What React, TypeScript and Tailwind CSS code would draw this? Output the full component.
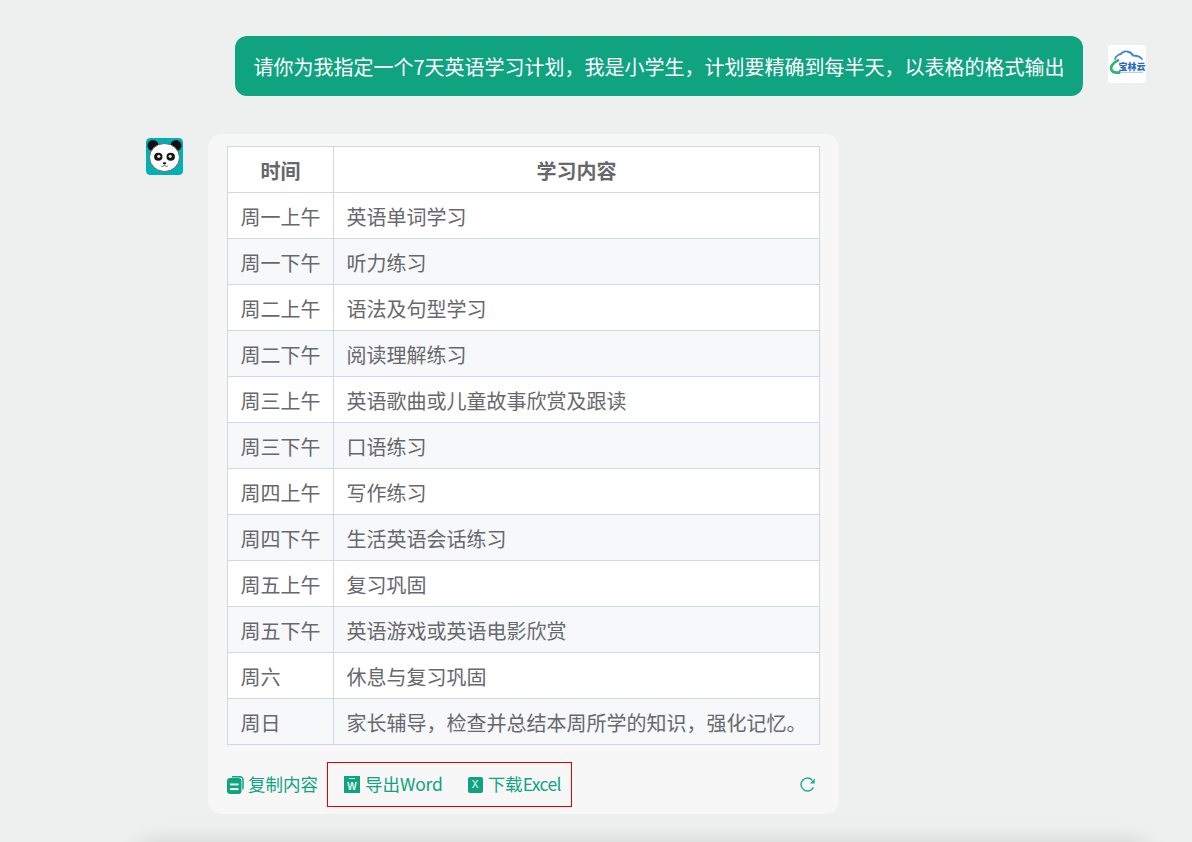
const rows = [
  ["周一上午", "英语单词学习"],
  ["周一下午", "听力练习"],
  ["周二上午", "语法及句型学习"],
  ["周二下午", "阅读理解练习"],
  ["周三上午", "英语歌曲或儿童故事欣赏及跟读"],
  ["周三下午", "口语练习"],
  ["周四上午", "写作练习"],
  ["周四下午", "生活英语会话练习"],
  ["周五上午", "复习巩固"],
  ["周五下午", "英语游戏或英语电影欣赏"],
  ["周六", "休息与复习巩固"],
  ["周日", "家长辅导，检查并总结本周所学的知识，强化记忆。"],
];

function CloudLogo() {
  return (
    <svg viewBox="0 0 38 38" className="h-full w-full">
      <path d="M7 14c1-3 4-5 6-5 1-2 4-3 6-2.500 3 .5 5 2 6 4 4 0 7 1 9 3.500" fill="none" stroke="#3f86d8" strokeWidth="1.800" strokeLinecap="round" />
      <path d="M10 15.500c-5 2-8 6-6.500 9.500 1 2.500 4 3 8 2.500" fill="none" stroke="#2fb56f" strokeWidth="2.800" strokeLinecap="round" />
      <text x="10.500" y="24.800" fontSize="9" fontWeight="900" fill="#2a6cbd" fontFamily="'Noto Sans CJK SC', sans-serif">宝林云</text>
      <rect x="12" y="26.800" width="23" height="1" fill="#a9c4e2" />
    </svg>
  );
}

function PandaLogo() {
  return (
    <svg viewBox="0 0 37 37" className="h-full w-full">
      <rect width="37" height="37" rx="4" fill="#00b0b5" />
      <circle cx="7" cy="7.500" r="5.500" fill="#111" />
      <circle cx="30" cy="7.500" r="5.500" fill="#111" />
      <ellipse cx="18.500" cy="19.500" rx="15" ry="14" fill="#fff" stroke="#666" strokeWidth="1" />
      <ellipse cx="12.300" cy="18.800" rx="4.200" ry="4" fill="#161616" />
      <ellipse cx="24.700" cy="18.800" rx="4.200" ry="4" fill="#161616" />
      <circle cx="12.800" cy="18.300" r="1.600" fill="#ddd" />
      <circle cx="24.200" cy="18.300" r="1.600" fill="#ddd" />
      <ellipse cx="18.500" cy="25.300" rx="1.800" ry="1.100" fill="#111" />
      <path d="M15 28c1.500 .8 2.500 .6 3.500 -1c1 1.600 2 1.800 3.500 1" fill="none" stroke="#444" strokeWidth="0.700" />
    </svg>
  );
}

function CopyIcon() {
  return (
    <svg viewBox="0 0 17 18" className="h-[18px] w-[17px]">
      <path d="M5 .8h8a3 3 0 0 1 3 3v9.500" fill="none" stroke="#10a37f" strokeWidth="1.500" />
      <rect x="0" y="2" width="14.500" height="16" rx="3" fill="#10a37f" />
      <rect x="3" y="7.500" width="8.500" height="1.900" fill="#fff" />
      <rect x="3" y="12.200" width="8.500" height="1.900" fill="#fff" />
    </svg>
  );
}

function RefreshIcon() {
  return (
    <svg viewBox="0 0 16 16" className="h-[16px] w-[16px]" fill="none">
      <path d="M13.400 10.400A6.500 6.500 0 1 1 12.400 3.200" stroke="#2bb08f" strokeWidth="1.500" />
      <path d="M14.800 1.600v5h-5z" fill="#2bb08f" />
    </svg>
  );
}

export default function App() {
  return (
    <div className="relative h-[842px] w-full overflow-hidden bg-[#eef0ef] font-['Noto_Sans_CJK_SC','Noto_Sans',sans-serif] text-[20px] text-[#66686c]">
      {/* user message */}
      <div className="flex items-start pl-[235px] pr-[46px] pt-[36px]">
        <div className="flex h-[60px] w-[848px] items-center justify-center rounded-[12px] bg-[#10a37f] pt-[2px] whitespace-nowrap text-white">
          请你为我指定一个7天英语学习计划，我是小学生，计划要精确到每半天，以表格的格式输出
        </div>
        <div className="ml-[25px] mt-[9px] h-[38px] w-[38px] overflow-hidden rounded-[3px] bg-white">
          <CloudLogo />
        </div>
      </div>

      {/* assistant message */}
      <div className="mt-[38px] flex items-start pl-[146px]">
        <div className="mt-[4px] h-[37px] w-[37px] overflow-hidden rounded-[4px]">
          <PandaLogo />
        </div>
        <div className="ml-[25px] w-[631px] rounded-[14px] bg-[#f7f7f7] px-[19px] pb-[7px] pt-[12px]">
          <table className="w-[593px] table-fixed border-collapse border border-[#d0d7e3]">
            <thead>
              <tr className="h-[46px] bg-white">
                <th className="w-[106px] border border-[#d0d7e3] pt-[2px] font-bold">时间</th>
                <th className="border border-[#d0d7e3] pt-[2px] font-bold">学习内容</th>
              </tr>
            </thead>
            <tbody>
              {rows.map(([time, content], i) => (
                <tr key={time} className={i % 2 === 0 ? "h-[46px] bg-white" : "h-[46px] bg-[#f6f8fa]"}>
                  <td className="border border-[#d0d7e3] px-[12.5px] pt-[2px] whitespace-nowrap">{time}</td>
                  <td className="border border-[#d0d7e3] pl-[12.5px] pr-[13px] pt-[2px] whitespace-nowrap">{content}</td>
                </tr>
              ))}
            </tbody>
          </table>
          <div className="mt-[17px] flex h-[45px] items-center text-[17.5px] text-[#10a37f]">
            <span className="flex items-center gap-[4px]">
              <CopyIcon />
              复制内容
            </span>
            <div className="ml-[9px] flex h-[45px] w-[245px] items-center gap-[25px] border border-[#e60000] pl-[16px]">
              <span className="flex items-center gap-[5px]">
                <span className="relative flex h-[17px] w-[16px] items-end justify-center bg-[#10a37f] pb-[1px] font-['Liberation_Sans',sans-serif] text-[10px] font-bold leading-none text-[#dff5ee]">
                  <span className="absolute left-[5px] top-[2px] h-[1px] w-[6px] bg-[#bfe9dc]" />
                  W
                </span>
                <span>
                  导出<span className="tracking-[-0.2px]">Word</span>
                </span>
              </span>
              <span className="flex items-center gap-[5px]">
                <span className="flex h-[16px] w-[15px] items-center justify-center rounded-[2px] bg-[#10a37f] font-['Liberation_Sans',sans-serif] text-[10px] leading-none text-white">
                  X
                </span>
                <span>
                  下载<span className="tracking-[-0.6px]">Excel</span>
                </span>
              </span>
            </div>
            <span className="ml-auto mr-[4px]">
              <RefreshIcon />
            </span>
          </div>
        </div>
      </div>

      {/* shadow of the input bar just below the fold */}
      <div className="absolute left-[135px] right-[40px] top-[842px] h-[60px] rounded-[20px] shadow-[0_0_22px_rgba(0,0,0,0.12)]" />
    </div>
  );
}
